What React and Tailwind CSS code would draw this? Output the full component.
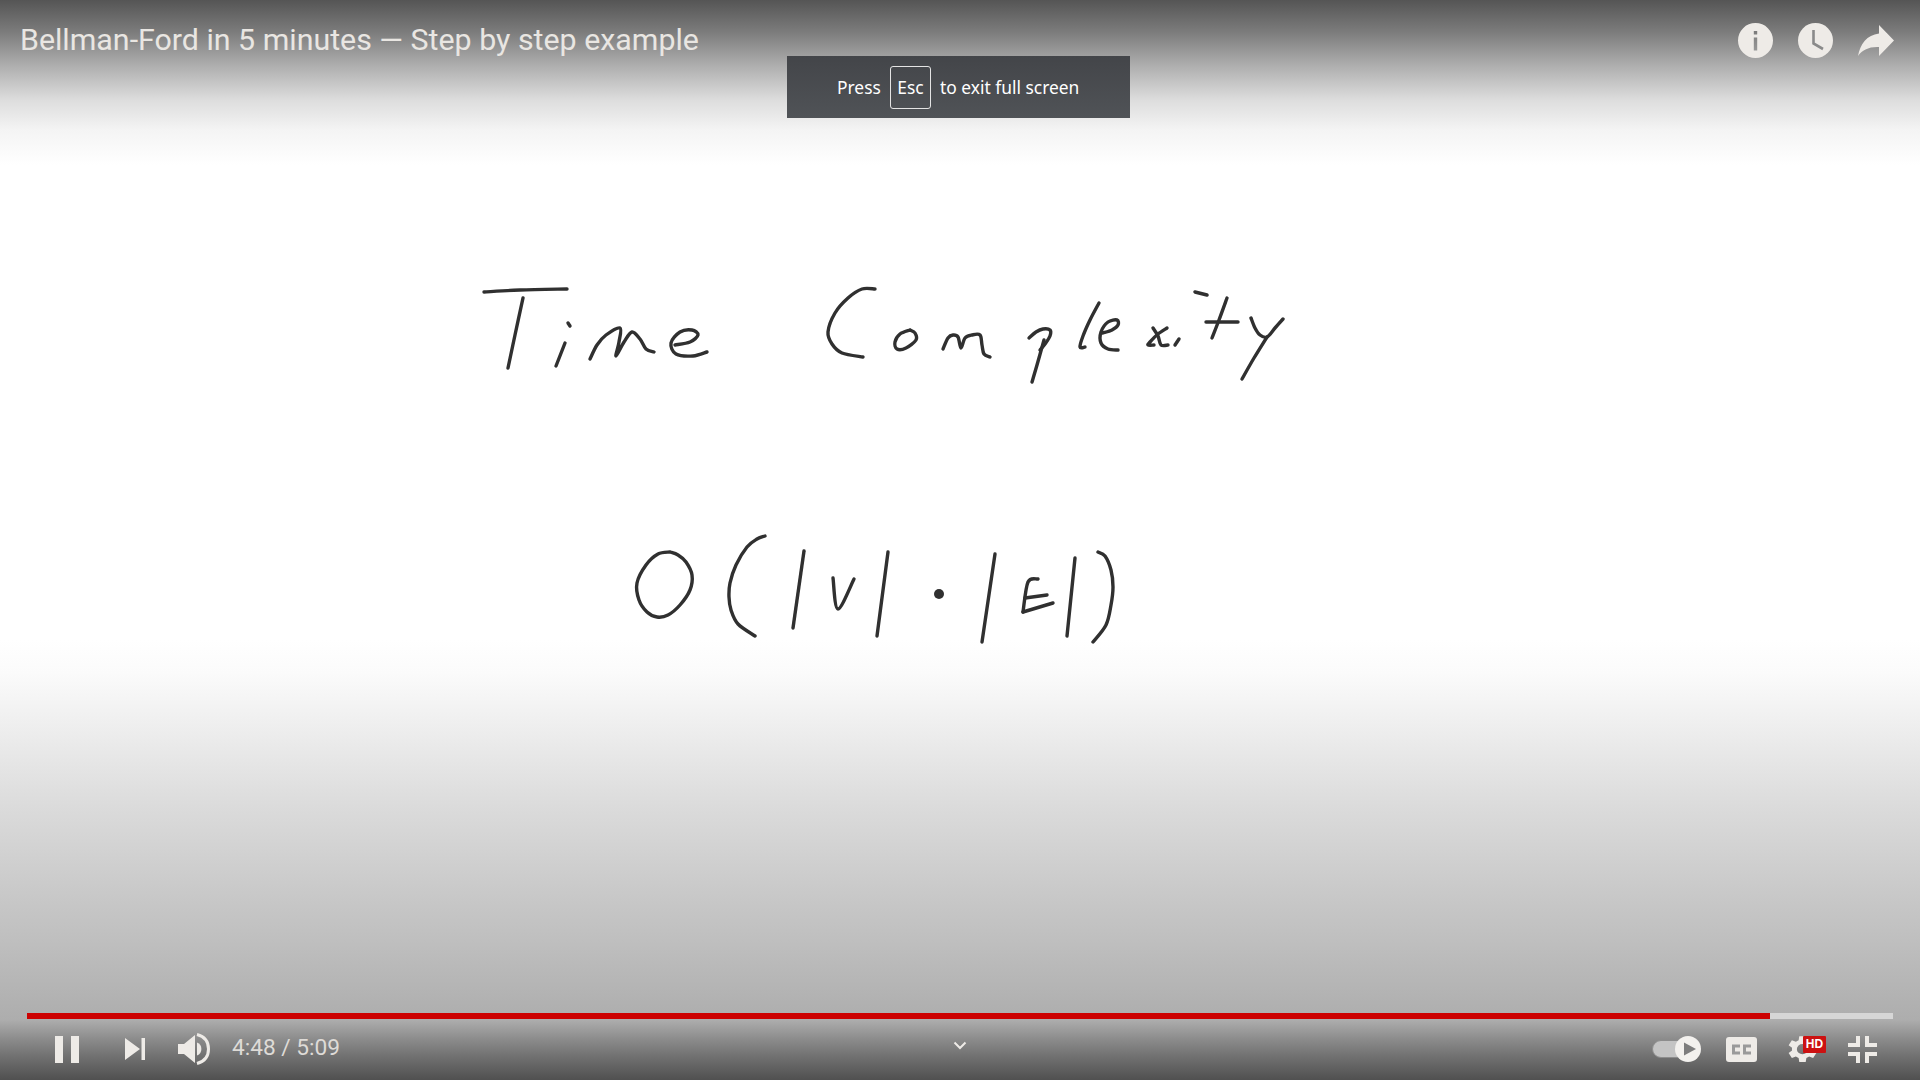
import React from "react";

const smooth = (p) => {
  let d = `M${p[0][0]} ${p[0][1]}`;
  for (let i = 0; i < p.length - 1; i++) {
    const a = p[Math.max(i - 1, 0)], b = p[i], c = p[i + 1], e = p[Math.min(i + 2, p.length - 1)];
    d += ` C${b[0] + (c[0] - a[0]) / 6} ${b[1] + (c[1] - a[1]) / 6} ${c[0] - (e[0] - b[0]) / 6} ${c[1] - (e[1] - b[1]) / 6} ${c[0]} ${c[1]}`;
  }
  return d;
};

const strokes = [
  [[484,292],[520,290],[567,289]],
  [[523,298],[515,335],[508,368]],
  [[568,323],[570,326]],
  [[565,343],[556,366]],
  [[590,359],[597,345],[606,335],[620,328],[619,342],[616,356],[624,342],[632,332],[640,339],[646,349],[654,352]],
  [[675,345],[690,342],[698,335],[692,330],[680,332],[671,343],[676,354],[693,356],[707,352]],
  [[875,289],[862,289],[848,298],[835,313],[828,332],[832,344],[842,353],[863,357]],
  [[910,330],[900,334],[895,342],[897,349],[906,348],[916,340],[915,333],[910,330]],
  [[943,349],[948,338],[953,335],[958,337],[961,348],[965,338],[972,335],[980,335],[982,345],[984,354],[990,357]],
  [[1029,338],[1036,332],[1043,329],[1050,330],[1050,336],[1045,344],[1040,350]],
  [[1044,340],[1037,365],[1032,382]],
  [[1099,303],[1090,320],[1083,336],[1080,347],[1085,347]],
  [[1103,333],[1112,330],[1118,325],[1117,320],[1108,322],[1101,332],[1101,343],[1108,349],[1118,350]],
  [[1153,328],[1158,336],[1161,345],[1168,345]],
  [[1167,328],[1158,334],[1150,342],[1148,345],[1154,345]],
  [[1179,339],[1175,345]],
  [[1195,292],[1207,295]],
  [[1227,298],[1219,320],[1212,338]],
  [[1206,322],[1238,322]],
  [[1251,318],[1255,328],[1260,335],[1267,337],[1275,328],[1283,319]],
  [[1267,337],[1254,358],[1242,379]],
  [[670,552],[658,554],[646,565],[637,583],[639,600],[647,612],[657,617],[668,615],[680,605],[690,590],[692,575],[686,562],[678,555],[670,552]],
  [[765,536],[757,539],[747,547],[736,565],[730,583],[729,597],[731,610],[738,624],[755,636]],
  [[804,551],[793,628]],
  [[833,578],[838,609],[854,579]],
  [[888,552],[877,636]],
  [[995,554],[982,642]],
  [[1038,579],[1028,582],[1023,612]],
  [[1025,598],[1047,595]],
  [[1023,612],[1053,603]],
  [[1075,558],[1067,636]],
  [[1098,552],[1105,556],[1111,570],[1113,587],[1111,605],[1106,625],[1093,642]],
];

function Handwriting() {
  return (
    <svg className="absolute inset-0 blur-[0.6px]" width="1920" height="1080" viewBox="0 0 1920 1080" fill="none">
      {strokes.map((s, i) => (
        <path key={i} d={smooth(s)} stroke="#303030" strokeWidth="3.4" strokeLinecap="round" strokeLinejoin="round" />
      ))}
      <circle cx="939" cy="594" r="5" fill="#303030" />
    </svg>
  );
}

const ink = "#eeebe7";

export default function App() {
  return (
    <div className="relative w-full h-[1080px] overflow-hidden bg-white flex flex-col justify-between font-['Roboto',sans-serif]">
      <div className="absolute inset-x-0 top-0 h-[165px] bg-[linear-gradient(to_bottom,#555555_0px,#7d7d7d_33px,#b0b0b0_67px,#dddddd_100px,#f4f4f4_130px,#ffffff_165px)]" />
      <div className="absolute inset-x-0 bottom-0 h-[440px] bg-[linear-gradient(to_bottom,#ffffff_0px,#fbfbfb_33px,#ebebeb_100px,#dbdbdb_167px,#cdcdcd_233px,#bfbfbf_300px,#b0b0b0_367px,#adadad_380px,#8a8a8a_400px,#707070_417px,#505050_440px)]" />
      <Handwriting />

      <div className="relative flex items-start justify-between pl-[20px] pr-[26px] pt-[22px]">
        <div className="text-[30.35px] leading-[36px] text-[#e9e6e2] font-normal whitespace-nowrap">Bellman-Ford in 5 minutes — Step by step example</div>
        <div className="flex items-center gap-[25px] pt-[1px]">
          <svg width="35" height="35" viewBox="0 0 35 35">
            <path fill={ink} fillRule="evenodd" d="M17.5 0a17.5 17.5 0 1 0 0 35a17.5 17.5 0 1 0 0-35zM15.8 8h3.4v3.6h-3.4zM15.8 14.5h3.4v13h-3.4z" />
          </svg>
          <svg width="35" height="35" viewBox="0 0 35 35">
            <circle cx="17.5" cy="17.5" r="17.5" fill={ink} />
            <path d="M15.5 7v13.5l9.5 5.5" fill="none" stroke="#8a8a8a" strokeWidth="2.6" />
          </svg>
          <svg width="36" height="31" viewBox="0 0 36 31">
            <path fill={ink} d="M21 0l15 15.5L21 31V22C11 21.5 4 25 0 31C2 19 9 10 21 8.5z" />
          </svg>
        </div>
      </div>

      <div className="absolute left-[787px] top-[56px] w-[343px] h-[62px] pl-[50px] bg-[linear-gradient(to_bottom,#434549,#505357)] flex items-center text-white text-[17.4px] font-['Noto_Sans',sans-serif]">
        <span className="w-[53px] pt-[1px]">Press</span>
        <span className="w-[41px] h-[43px] rounded-[3px] border border-[#e4e4e4] flex items-center justify-center pt-[1px]">Esc</span>
        <span className="ml-[9px] pt-[1px]">to exit full screen</span>
      </div>

      <div className="relative pb-[15px]">
        <div className="mx-[27px] h-[6px] bg-[#d6d6d6]">
          <div className="h-full w-[1743px] bg-[#cc0000]" />
        </div>
        <div className="flex items-center justify-between h-[32px] mt-[14px] pl-[55px] pr-[43px]">
          <div className="flex items-center text-[#dedbd7]">
            <div className="flex gap-[8px]">
              <div className="w-[8px] h-[27px] bg-[#eeebe7]" />
              <div className="w-[8px] h-[27px] bg-[#eeebe7]" />
            </div>
            <svg className="ml-[46px]" width="20" height="22" viewBox="0 0 20 22">
              <path fill={ink} d="M0 0l15 11L0 22zM16.5 0H20v22h-3.5z" />
            </svg>
            <svg className="ml-[33px]" width="32" height="32" viewBox="0 0 32 32">
              <path fill={ink} d="M0 11h6L17 2v28L6 21H0z" />
              <path fill={ink} d="M19 9.5a7 7 0 0 1 0 13z" />
              <path fill="none" stroke={ink} strokeWidth="3" d="M19 1.5c7.5 2 11.5 7.5 11.5 14.5s-4 12.5-11.5 14.5" />
            </svg>
            <div className="ml-[22px] -mt-[2px] text-[22.7px] leading-[32px] whitespace-nowrap">4:48 / 5:09</div>
          </div>
          <svg className="absolute left-[953px] top-[28px]" width="14" height="9" viewBox="0 0 14 9">
            <path d="M1.5 1.5L7 7l5.5-5.5" fill="none" stroke={ink} strokeWidth="2" />
          </svg>
          <div className="flex items-center">
            <div className="relative w-[49px] h-[26px] flex items-center">
              <div className="w-[36px] h-[18px] rounded-full bg-[#c4c4c4] border border-[#8d8d8d]" />
              <svg className="absolute right-0 top-0" width="26" height="26" viewBox="0 0 26 26">
                <circle cx="13" cy="13" r="13" fill="#f3f1ee" />
                <path d="M9 6.5L21 13 9 19.5z" fill="#7d7d7d" />
              </svg>
            </div>
            <svg className="ml-[25px]" width="31" height="25" viewBox="0 0 31 25">
              <rect width="31" height="25" rx="3" fill={ink} />
              <path fill="none" stroke="#9a9a9a" strokeWidth="3" d="M14 9H7.5v7H14M25 9h-6.5v7H25" />
            </svg>
            <div className="relative ml-[31px] w-[38px] h-[27px]">
              <svg className="absolute left-0 top-0" width="29" height="27" viewBox="4 3 18 18.5" preserveAspectRatio="none">
                <path fill={ink} fillRule="evenodd" d="M19.4 13a7.5 7.5 0 0 0 0-2l2.1-1.6-2-3.5-2.5 1a7.5 7.5 0 0 0-1.7-1L15 3.2h-4l-.4 2.7a7.5 7.5 0 0 0-1.7 1l-2.5-1-2 3.5L6.5 11a7.5 7.5 0 0 0 0 2l-2.1 1.6 2 3.5 2.5-1a7.5 7.5 0 0 0 1.7 1l.4 2.7h4l.4-2.7a7.5 7.5 0 0 0 1.7-1l2.5 1 2-3.5zM13 15.5a3.5 3.5 0 1 1 0-7a3.5 3.5 0 0 1 0 7z" />
              </svg>
              <div className="absolute left-[15px] top-0 w-[23px] h-[17px] rounded-[1px] bg-[#cc1111] text-white text-[12px] leading-[17px] font-bold text-center font-['Liberation_Sans',sans-serif]">HD</div>
            </div>
            <svg className="ml-[22px]" width="29" height="27" viewBox="0 0 29 27" fill={ink}>
              <path d="M8 0h4v11H0V7h8zM17 0h4v7h8v4H17zM0 16h12v11H8v-7H0zM17 16h12v4h-8v7h-4z" />
            </svg>
          </div>
        </div>
      </div>
    </div>
  );
}
